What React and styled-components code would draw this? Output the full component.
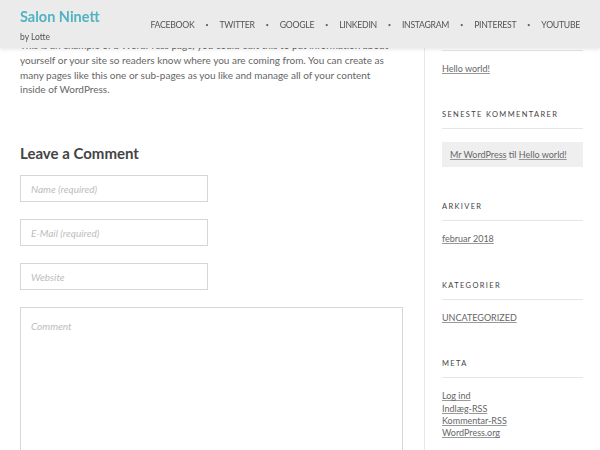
import styled, { createGlobalStyle } from "styled-components";

const GlobalStyle = createGlobalStyle`
    html, body {
        margin: 0;
        padding: 0;
        background: #fff;
        font-family: Lato, "Open Sans", sans-serif;
        overflow: hidden;
    }
`;

const NAV = ["Facebook", "Twitter", "Google", "LinkedIn", "Instagram", "Pinterest", "YouTube"];

function App() {
    return (
        <>
            <GlobalStyle />
            <Header>
                <Brand>
                    <SiteTitle>Salon Ninett</SiteTitle>
                    <Tagline>by Lotte</Tagline>
                </Brand>
                <Nav>
                    {NAV.map((item, i) => (
                        <NavItem key={item} first={i === 0}>{item}</NavItem>
                    ))}
                </Nav>
            </Header>
            <Page>
                <Main>
                    <Paragraph>
                        This is an example of a WordPress page, you could edit this to put information about
                        yourself or your site so readers know where you are coming from. You can create as
                        many pages like this one or sub-pages as you like and manage all of your content
                        inside of WordPress.
                    </Paragraph>
                    <CommentTitle>Leave a Comment</CommentTitle>
                    <Form>
                        <Field placeholder="Name (required)" />
                        <Field placeholder="E-Mail (required)" />
                        <Field placeholder="Website" />
                        <Textarea placeholder="Comment" />
                    </Form>
                </Main>
                <Sidebar>
                    <Widget>
                        <WidgetTitle>Seneste indlæg</WidgetTitle>
                        <LinkList>
                            <Link>Hello world!</Link>
                        </LinkList>
                    </Widget>
                    <Widget>
                        <WidgetTitle>Seneste kommentarer</WidgetTitle>
                        <RecentComment>
                            <Link>Mr WordPress</Link> til <Link>Hello world!</Link>
                        </RecentComment>
                    </Widget>
                    <Widget>
                        <WidgetTitle>Arkiver</WidgetTitle>
                        <LinkList>
                            <Link>februar 2018</Link>
                        </LinkList>
                    </Widget>
                    <Widget>
                        <WidgetTitle>Kategorier</WidgetTitle>
                        <LinkList>
                            <Link>UNCATEGORIZED</Link>
                        </LinkList>
                    </Widget>
                    <Widget>
                        <WidgetTitle>Meta</WidgetTitle>
                        <LinkList>
                            <Link>Log ind</Link>
                            <Link>Indlæg-RSS</Link>
                            <Link>Kommentar-RSS</Link>
                            <Link>WordPress.org</Link>
                        </LinkList>
                    </Widget>
                </Sidebar>
            </Page>
        </>
    );
}

export default App;

const Header = styled.header`
    position: fixed;
    top: 0;
    left: 0;
    right: 0;
    height: 48px;
    z-index: 10;
    background-color: #ebebeb;
    box-shadow: rgba(0, 0, 0, 0.08) 0px 2px 3px;
    display: flex;
    align-items: center;
    justify-content: space-between;
    padding: 0 20px;
    box-sizing: border-box;
`

const Brand = styled.div`
    display: flex;
    flex-direction: column;
    gap: 6px;
    margin-top: 2px;
`

const SiteTitle = styled.div`
    font-size: 14.5px;
    font-weight: 700;
    color: #4fb3c1;
    line-height: 18px;
`

const Tagline = styled.div`
    font-size: 8.5px;
    color: #555;
    line-height: 11px;
`

const Nav = styled.nav`
    display: flex;
    align-items: center;
`

const NavItem = styled.span`
    font-size: 8.7px;
    letter-spacing: -0.28px;
    text-transform: uppercase;
    color: #555;
    display: flex;
    align-items: center;

    &::before {
        content: ${(p) => (p.first ? "none" : '"•"')};
        font-size: 6px;
        color: #666;
        width: 25px;
        text-align: center;
        letter-spacing: 0;
    }
`

const Page = styled.div`
    display: grid;
    grid-template-columns: 424px 1fr;
    height: 450px;
`

const Main = styled.main`
    padding: 38px 22px 0 20px;
`

const Paragraph = styled.p`
    margin: 0;
    max-width: 372px;
    font-size: 10px;
    line-height: 14.8px;
    color: #666;
`

const CommentTitle = styled.h3`
    margin: 47px 0 0;
    font-size: 15px;
    font-weight: 700;
    line-height: 18px;
    color: #444;
`

const Form = styled.form`
    margin-top: 13px;
    display: flex;
    flex-direction: column;
    gap: 17px;
`

const Field = styled.input`
    width: 188px;
    height: 27px;
    box-sizing: border-box;
    border: 1px solid #d6d6d6;
    padding: 0 10px;
    font-family: Lato, sans-serif;
    font-size: 10px;
    font-style: italic;
    outline: none;

    &::placeholder {
        color: #bdbdbd;
    }
`

const Textarea = styled.textarea`
    width: 383px;
    height: 150px;
    box-sizing: border-box;
    border: 1px solid #d6d6d6;
    padding: 12px 10px;
    font-family: Lato, sans-serif;
    font-size: 10px;
    font-style: italic;
    resize: none;
    outline: none;

    &::placeholder {
        color: #bdbdbd;
    }
`

const Sidebar = styled.aside`
    border-left: 1px solid #e8e8e8;
    padding: 32px 17px 0 17px;
    display: flex;
    flex-direction: column;
    gap: 35px;
`

const Widget = styled.section`
    display: flex;
    flex-direction: column;
`

const WidgetTitle = styled.h4`
    margin: 0 0 12px;
    padding-bottom: 9px;
    border-bottom: 1px solid #e6e6e6;
    font-size: 7.5px;
    font-weight: 400;
    letter-spacing: 1.35px;
    text-transform: uppercase;
    color: #444;
    line-height: 9px;
`

const LinkList = styled.div`
    display: flex;
    flex-direction: column;
    font-size: 9px;
    line-height: 12.4px;
`

const Link = styled.a`
    color: #666;
    text-decoration: underline;
    text-decoration-color: #999;
`

const RecentComment = styled.div`
    margin-top: 1px;
    background: #efefef;
    padding: 7px 8px;
    font-size: 9px;
    line-height: 11px;
    color: #666;
`
